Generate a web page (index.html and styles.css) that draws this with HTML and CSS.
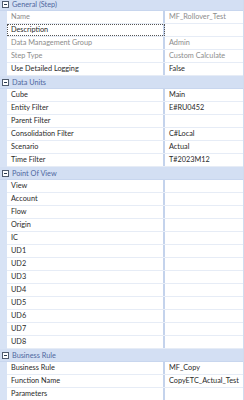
FILE: index.html
```html
<!DOCTYPE html>
<html>
<head>
<meta charset="utf-8">
<link rel="stylesheet" href="styles.css">
</head>
<body>
<div class="grid">
  <div class="cat"><span class="tog"></span><span class="ctext">General (Step)</span></div>
  <div class="row"><div class="name ro">Name</div><div class="val ro">MF_Rollover_Test</div></div>
  <div class="row focus"><div class="name">Description</div><div class="val"></div></div>
  <div class="row"><div class="name ro">Data Management Group</div><div class="val ro">Admin</div></div>
  <div class="row"><div class="name ro">Step Type</div><div class="val ro">Custom Calculate</div></div>
  <div class="row"><div class="name">Use Detailed Logging</div><div class="val">False</div></div>

  <div class="cat"><span class="tog"></span><span class="ctext">Data Units</span></div>
  <div class="row"><div class="name">Cube</div><div class="val">Main</div></div>
  <div class="row"><div class="name">Entity Filter</div><div class="val">E#RU0452</div></div>
  <div class="row"><div class="name">Parent Filter</div><div class="val"></div></div>
  <div class="row"><div class="name">Consolidation Filter</div><div class="val">C#Local</div></div>
  <div class="row"><div class="name">Scenario</div><div class="val">Actual</div></div>
  <div class="row"><div class="name">Time Filter</div><div class="val">T#2023M12</div></div>

  <div class="cat"><span class="tog"></span><span class="ctext">Point Of View</span></div>
  <div class="row"><div class="name">View</div><div class="val"></div></div>
  <div class="row"><div class="name">Account</div><div class="val"></div></div>
  <div class="row"><div class="name">Flow</div><div class="val"></div></div>
  <div class="row"><div class="name">Origin</div><div class="val"></div></div>
  <div class="row"><div class="name">IC</div><div class="val"></div></div>
  <div class="row"><div class="name">UD1</div><div class="val"></div></div>
  <div class="row"><div class="name">UD2</div><div class="val"></div></div>
  <div class="row"><div class="name">UD3</div><div class="val"></div></div>
  <div class="row"><div class="name">UD4</div><div class="val"></div></div>
  <div class="row"><div class="name">UD5</div><div class="val"></div></div>
  <div class="row"><div class="name">UD6</div><div class="val"></div></div>
  <div class="row"><div class="name">UD7</div><div class="val"></div></div>
  <div class="row"><div class="name">UD8</div><div class="val"></div></div>

  <div class="cat"><span class="tog"></span><span class="ctext">Business Rule</span></div>
  <div class="row"><div class="name">Business Rule</div><div class="val">MF_Copy</div></div>
  <div class="row"><div class="name">Function Name</div><div class="val">CopyETC_Actual_Test</div></div>
  <div class="row"><div class="name">Parameters</div><div class="val"></div></div>
</div>
</body>
</html>
```
FILE: styles.css
```css
html, body {
  margin: 0;
  padding: 0;
  background: #ffffff;
  overflow: hidden;
}
body {
  font-family: Lato, "Noto Sans", sans-serif;
  font-size: 7.3px;
  color: #2a2a2a;
}
.grid {
  margin-top: -2px;
  background: #d8e3f5;
  border-right: 1px solid #d0dbee;
}
.cat {
  height: 13px;
  display: flex;
  align-items: center;
  background: #d3dff3;
  border-bottom: 1px solid #c8d6ee;
  box-sizing: border-box;
}
.tog {
  width: 5px;
  height: 5px;
  margin-left: 2px;
  border: 1px solid #505c6e;
  background: #ffffff;
  position: relative;
  flex: none;
}
.tog::after {
  content: "";
  position: absolute;
  left: 1px;
  right: 1px;
  top: 2px;
  height: 1px;
  background: #2a3a50;
}
.ctext {
  margin-left: 3px;
  color: #4f68a0;
}
.row {
  height: 13px;
  display: flex;
  margin-left: 7px;
  background: #ffffff;
  box-sizing: border-box;
  border-bottom: 1px solid #e6ecf6;
}
.name {
  width: 158px;
  flex: none;
  padding-left: 4px;
  box-sizing: border-box;
  line-height: 12px;
  border-right: 2px solid #c4d3ec;
  white-space: nowrap;
  overflow: hidden;
}
.val {
  flex: 1;
  padding-left: 4px;
  line-height: 12px;
  white-space: nowrap;
  overflow: hidden;
}
.ro {
  color: #8c8c8c;
}
.focus .name {
  outline: 1px dotted #555;
  outline-offset: -1px;
}
```
